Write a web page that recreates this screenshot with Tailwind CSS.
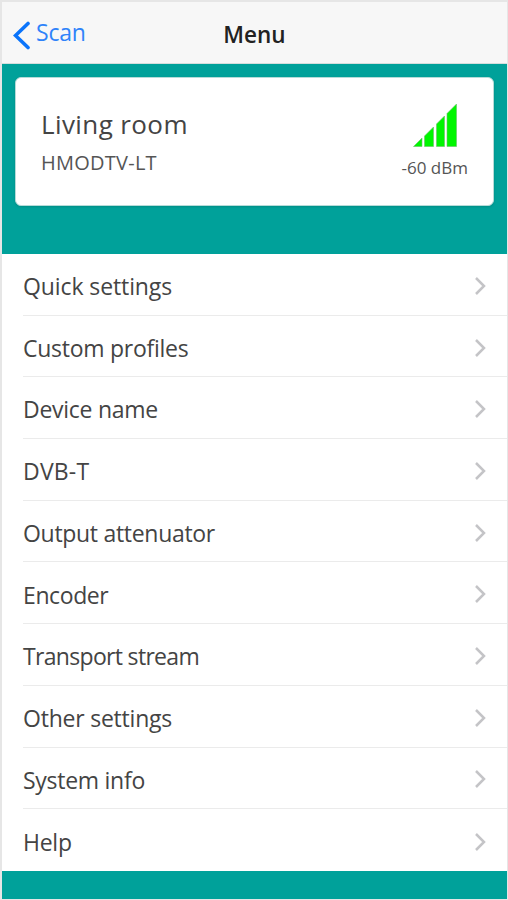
<!DOCTYPE html>
<html lang="en">
<head>
  <meta charset="UTF-8">
  <meta name="viewport" content="width=device-width, initial-scale=1">
  <title>Menu</title>
  <script src="https://cdn.jsdelivr.net/npm/@tailwindcss/browser@4"></script>
</head>
<body class="h-screen overflow-hidden bg-[#e6e6e6] pt-0.5 pr-px pb-px pl-0.5 font-['Open_Sans',sans-serif] text-[#444]">
  <div class="flex h-full flex-col bg-[#00a19a]">

    <!-- Nav bar -->
    <header class="grid h-[62px] shrink-0 grid-cols-3 items-center border-b border-[#d5dedd] bg-[#f7f7f7] pt-1">
      <a href="#" class="flex items-center gap-1.5 pl-[11px] text-[23px] text-[#2f83fa]">
        <svg class="mt-0.5 h-[29px] w-[17px]" viewBox="0 0 17 29" fill="none" stroke="#0a74fb" stroke-width="3.6" stroke-linecap="round"><path d="M15 2.5 2.5 14.5 15 26.5"/></svg>
        <span class="-mt-1 tracking-[-0.2px]">Scan</span>
      </a>
      <h1 class="text-center text-[22.5px] font-semibold text-[#222]">Menu</h1>
    </header>

    <!-- Device card -->
    <section class="h-[190px] shrink-0 px-[13px] pt-[13px]">
      <div class="flex h-[129px] justify-between rounded-md border border-[#b5dbd8] bg-white px-[25px] shadow-sm">
        <div class="pt-[27px]">
          <h2 class="text-[26px] leading-[38px] tracking-[0.4px]">Living room</h2>
          <p class="pt-1 text-[20px] leading-[32px] tracking-[0.25px] text-[#555]">HMODTV-LT</p>
        </div>
        <div class="flex flex-col items-center pt-[25px]">
          <svg class="h-[44px] w-[44px]" viewBox="0 0 44 44" fill="#00f600" stroke="#6cbf6c" stroke-width=".6"><path d="M.5 43.5 9 35v8.500zM11.500 43.500V33L20.500 24v19.500zM23.500 43.500V21L31.500 13v30.500zM34 43.500V10.500L43.500 1v42.500z"/></svg>
          <span class="pt-[9px] text-[17px] leading-6 text-[#555]">-60 dBm</span>
        </div>
      </div>
    </section>

    <!-- Menu list -->
    <ul id="menu" class="h-[617px] shrink-0 bg-white pl-[21px] text-[23px]"></ul>
  </div>

  <script>
    // label and letter spacing in px
    const items = [
      ['Quick settings', -0.1], ['Custom profiles', -0.27], ['Device name', -0.27], ['DVB-T', 0.2],
      ['Output attenuator', -0.3], ['Encoder', -0.4], ['Transport stream', -0.68],
      ['Other settings', -0.22], ['System info', -0.27], ['Help', -0.25]
    ];

    document.getElementById('menu').innerHTML = items.map(([label, spacing]) => `
      <li class="flex h-[61.7px] items-center justify-between border-b border-[#ebebeb] pr-[21px] last:border-0">
        <span class="pt-1" style="letter-spacing: ${spacing}px">${label}</span>
        <svg class="mt-[3px] h-[18px] w-3" viewBox="0 0 12 18" fill="none" stroke="#c4c4c7" stroke-width="2.5"><path d="m2 1 8 8-8 8"/></svg>
      </li>`).join('');
  </script>
</body>
</html>
